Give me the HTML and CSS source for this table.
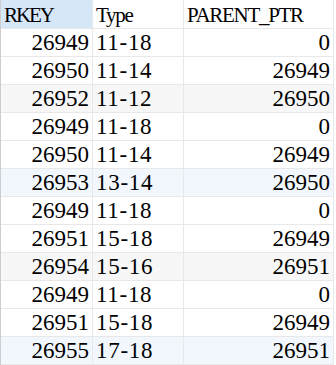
FILE: index.html
```html
<!DOCTYPE html>
<html>
<head>
<meta charset="utf-8">
<link rel="stylesheet" href="styles.css">
</head>
<body>
<div class="grid">
  <div class="cell head sel">RKEY</div><div class="cell head">Type</div><div class="cell head">PARENT_PTR</div>

  <div class="cell num">26949</div><div class="cell txt">11-18</div><div class="cell num">0</div>
  <div class="cell num">26950</div><div class="cell txt">11-14</div><div class="cell num">26949</div>
  <div class="cell num gray">26952</div><div class="cell txt gray">11-12</div><div class="cell num gray">26950</div>
  <div class="cell num">26949</div><div class="cell txt">11-18</div><div class="cell num">0</div>
  <div class="cell num">26950</div><div class="cell txt">11-14</div><div class="cell num">26949</div>
  <div class="cell num blue">26953</div><div class="cell txt blue">13-14</div><div class="cell num blue">26950</div>
  <div class="cell num">26949</div><div class="cell txt">11-18</div><div class="cell num">0</div>
  <div class="cell num">26951</div><div class="cell txt">15-18</div><div class="cell num">26949</div>
  <div class="cell num gray">26954</div><div class="cell txt gray">15-16</div><div class="cell num gray">26951</div>
  <div class="cell num">26949</div><div class="cell txt">11-18</div><div class="cell num">0</div>
  <div class="cell num">26951</div><div class="cell txt">15-18</div><div class="cell num">26949</div>
  <div class="cell num blue">26955</div><div class="cell txt blue">17-18</div><div class="cell num blue">26951</div>
</div>
</body>
</html>
```
FILE: styles.css
```css
html, body {
  margin: 0;
  padding: 0;
  background: #ffffff;
}
.grid {
  display: grid;
  grid-template-columns: 92px 91px 150px;
  grid-template-rows: 29px repeat(12, 28px);
  border-left: 1px solid #cdcdcd;
  width: 333px;
  font-family: "Liberation Serif", "Times New Roman", serif;
  font-size: 23px;
  color: #000;
}
.cell {
  border-right: 1px solid #e8e8e8;
  border-bottom: 1px solid #e8e8e8;
  display: flex;
  align-items: center;
  white-space: nowrap;
  overflow: hidden;
  padding-top: 1px;
}
.head {
  font-size: 21px;
  letter-spacing: -1.3px;
  padding-left: 3px;
  padding-top: 2px;
}
.head.sel {
  background: #d6e8f8;
  letter-spacing: -2.1px;
}
.num {
  justify-content: flex-end;
  padding-right: 3px;
}
.txt {
  padding-left: 3px;
  letter-spacing: 0.7px;
}
.gray {
  background: #f7f7f7;
}
.blue {
  background: #f1f7fd;
}
```
